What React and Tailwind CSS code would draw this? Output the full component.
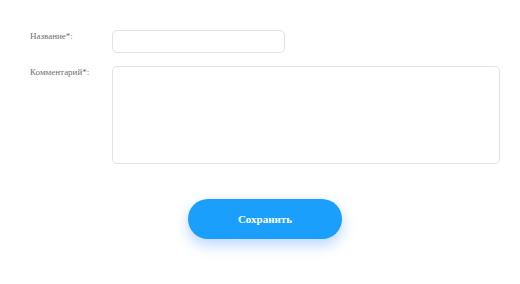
export default function App() {
  return (
    <div className="w-[520px] h-[284px] bg-white pl-[30px] pr-[20px] pt-[30px] font-['Liberation_Serif',serif]">
      <div className="flex items-start">
        <label className="w-[82px] pt-[1px] font-['Liberation_Serif',serif] text-[9px] leading-[11px] text-[#707070]">Название*:</label>
        <input className="w-[173px] h-[23px] rounded-[5px] border border-[#e2e2e2] bg-white outline-none" />
      </div>
      <div className="flex items-start mt-[13px]">
        <label className="w-[82px] pt-[1px] font-['Liberation_Serif',serif] text-[9px] leading-[11px] text-[#707070]">Комментарий*:</label>
        <textarea className="w-[388px] h-[98px] rounded-[5px] border border-[#e2e2e2] bg-white outline-none resize-none" />
      </div>
      <div className="flex justify-center mt-[35px]">
        <button className="w-[154px] h-[40px] rounded-full bg-[#1b9ffc] text-white text-[11px] font-bold font-['Liberation_Serif',serif] shadow-[0_6px_14px_rgba(27,120,252,0.3)]">
          Сохранить
        </button>
      </div>
    </div>
  );
}
